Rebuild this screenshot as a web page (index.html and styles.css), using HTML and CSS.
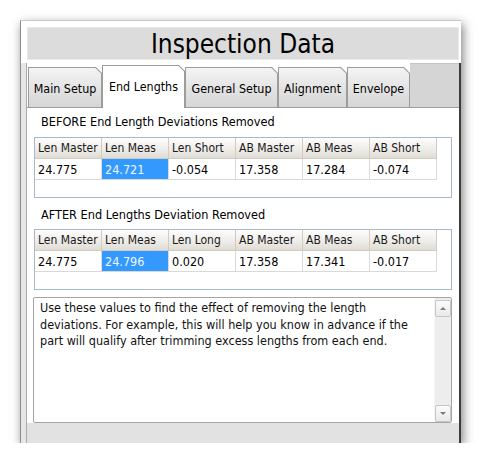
FILE: index.html
```html
<!DOCTYPE html>
<html>
<head>
<meta charset="utf-8">
<title>Inspection Data</title>
<link rel="stylesheet" href="styles.css">
</head>
<body>
<div class="window">
  <div class="titlebar">Inspection Data</div>
  <div class="frame">
    <div class="frame-left"></div>
    <div class="tabctl">
      <div class="tabstrip">
        <div class="tab tab-main"><span class="tab-face">Main Setup</span></div>
        <div class="tab tab-active tab-end"><span class="tab-face">End Lengths</span></div>
        <div class="tab tab-general"><span class="tab-face">General Setup</span></div>
        <div class="tab tab-align"><span class="tab-face">Alignment</span></div>
        <div class="tab tab-env"><span class="tab-face">Envelope</span></div>
        <div class="tab-filler"></div>
      </div>
      <div class="panel">
        <div class="group-label">BEFORE End Length Deviations Removed</div>
        <div class="grid-box">
          <div class="grid">
            <div class="hd">Len Master</div>
            <div class="hd">Len Meas</div>
            <div class="hd">Len Short</div>
            <div class="hd">AB Master</div>
            <div class="hd">AB Meas</div>
            <div class="hd">AB Short</div>
            <div class="cell">24.775</div>
            <div class="cell sel">24.721</div>
            <div class="cell">-0.054</div>
            <div class="cell">17.358</div>
            <div class="cell">17.284</div>
            <div class="cell">-0.074</div>
          </div>
        </div>
        <div class="group-label second">AFTER End Lengths Deviation Removed</div>
        <div class="grid-box">
          <div class="grid">
            <div class="hd">Len Master</div>
            <div class="hd">Len Meas</div>
            <div class="hd">Len Long</div>
            <div class="hd">AB Master</div>
            <div class="hd">AB Meas</div>
            <div class="hd">AB Short</div>
            <div class="cell">24.775</div>
            <div class="cell sel">24.796</div>
            <div class="cell">0.020</div>
            <div class="cell">17.358</div>
            <div class="cell">17.341</div>
            <div class="cell">-0.017</div>
          </div>
        </div>
        <div class="notes">
          <div class="notes-text">Use these values to find the effect of removing the length<br>deviations. For example, this will help you know in advance if the<br>part will qualify after trimming excess lengths from each end.</div>
          <div class="scrollbar">
            <div class="sb-btn"><span class="arrow-up"></span></div>
            <div class="sb-track"></div>
            <div class="sb-btn"><span class="arrow-down"></span></div>
          </div>
        </div>
      </div>
      <div class="statusbar"></div>
    </div>
    <div class="frame-right"></div>
  </div>
</div>
</body>
</html>
```

FILE: styles.css
```css
* { box-sizing: border-box; }
html, body { margin: 0; padding: 0; background: #fff; }
body {
  font-family: "DejaVu Sans Condensed", "DejaVu Sans", sans-serif;
  font-size: 12.4px;
  color: #000;
  padding: 20px 0 0 20px;
}
.window {
  width: 441px;
  height: 423px;
  background: #fff;
  border-top: 1px solid #c8c8c8;
  border-left: 1px solid #8c8c8c;
  box-shadow: 2px 4px 10px rgba(0, 0, 0, 0.5);
  display: flex;
  flex-direction: column;
}
.titlebar {
  margin: 6px 2px 0 6px;
  height: 33px;
  background: #dcdcdc;
  border: 1px solid #e9e9e9;
  display: flex;
  align-items: center;
  justify-content: center;
  font-size: 26px;
  line-height: 1;
}
.frame { margin-top: 3px; flex: 1; display: flex; }
.frame-left { width: 6px; background: #e6e6e6; border-right: 1px solid #ababab; }
.frame-right { width: 2px; background: #3c3c3c; }
.tabctl { flex: 1; display: flex; flex-direction: column; }
.tabstrip { height: 44px; display: flex; align-items: flex-end; padding-left: 1px; }
.tab {
  flex: none;
  height: 40px;
  padding: 1px 1px 0;
  background: #9c9c9c;
  clip-path: polygon(0 0, calc(100% - 6px) 0, 100% 6px, 100% 100%, 0 100%);
}
.tab-face {
  height: 100%;
  display: flex;
  align-items: center;
  justify-content: center;
  padding-top: 1px;
  white-space: nowrap;
  background: linear-gradient(#f4f4f4, #e4e4e4 50%, #d6d6d6);
  clip-path: polygon(0 0, calc(100% - 5.6px) 0, 100% 5.6px, 100% 100%, 0 100%);
}
.tab-active { height: 43px; margin-bottom: -1px; position: relative; z-index: 1; }
.tab-active .tab-face { background: #fff; padding-top: 0; padding-bottom: 2px; }
.tab-main { width: 74px; }
.tab-end { width: 83px; }
.tab-general { width: 93px; }
.tab-align { width: 69px; }
.tab-env { width: 63px; }
.tab-filler { flex: 1; align-self: stretch; background: #d5d5d5; border-top: 1px solid #c4c4c4; }
.panel {
  flex: 1;
  background: #fff;
  border-top: 1px solid #9c9c9c;
  padding: 6px 7px 0 6px;
  display: flex;
  flex-direction: column;
}
.group-label { padding-left: 8px; height: 16px; line-height: 16px; margin-bottom: 7px; white-space: nowrap; font-size: 12.6px; }
.group-label.second { margin-top: 9px; margin-bottom: 6px; }
.grid-box { margin-left: 1px; height: 61px; border: 1px solid #a7b9cb; background: #fff; }
.grid { display: grid; grid-template-columns: repeat(6, 67px); grid-template-rows: 21px 21px; width: 402px; font-size: 12px; }
.hd {
  background: linear-gradient(#fdfdfd, #efede9 55%, #dfdcd4);
  border-right: 1px solid #d0ccc4;
  border-bottom: 1px solid #d0ccc4;
  padding-left: 3px;
  display: flex;
  align-items: center;
  white-space: nowrap;
  color: #1a1a1a;
}
.cell {
  border-right: 1px solid #d9d9d9;
  border-bottom: 1px solid #d9d9d9;
  padding-left: 3px;
  display: flex;
  align-items: center;
  white-space: nowrap;
  font-size: 12.5px;
}
.cell.sel { background: #3399ff; color: #eef6ff; }
.notes {
  margin-top: 7px;
  height: 126px;
  border: 1px solid #a5a5a5;
  border-radius: 2px;
  display: flex;
  background: #fff;
}
.notes-text {
  flex: 1;
  padding: 2px 6px;
  line-height: 16.5px;
  font-size: 12.5px;
  white-space: nowrap;
  color: #111;
}
.scrollbar {
  width: 17px;
  display: flex;
  flex-direction: column;
  background: #ededed;
  border-left: 1px solid #f6f6f6;
  padding-top: 2px;
}
.sb-track { flex: 1; }
.sb-btn {
  height: 17px;
  border: 1px solid #c6c6c6;
  border-radius: 2px;
  background: linear-gradient(#fbfbfb, #e9e9e9);
  display: flex;
  align-items: center;
  justify-content: center;
}
.arrow-up { width: 0; height: 0; border-left: 3px solid transparent; border-right: 3px solid transparent; border-bottom: 3px solid #7a7a7a; }
.arrow-down { width: 0; height: 0; border-left: 3px solid transparent; border-right: 3px solid transparent; border-top: 3px solid #7a7a7a; }
.statusbar { height: 20px; background: #e2e2e2; }
```
